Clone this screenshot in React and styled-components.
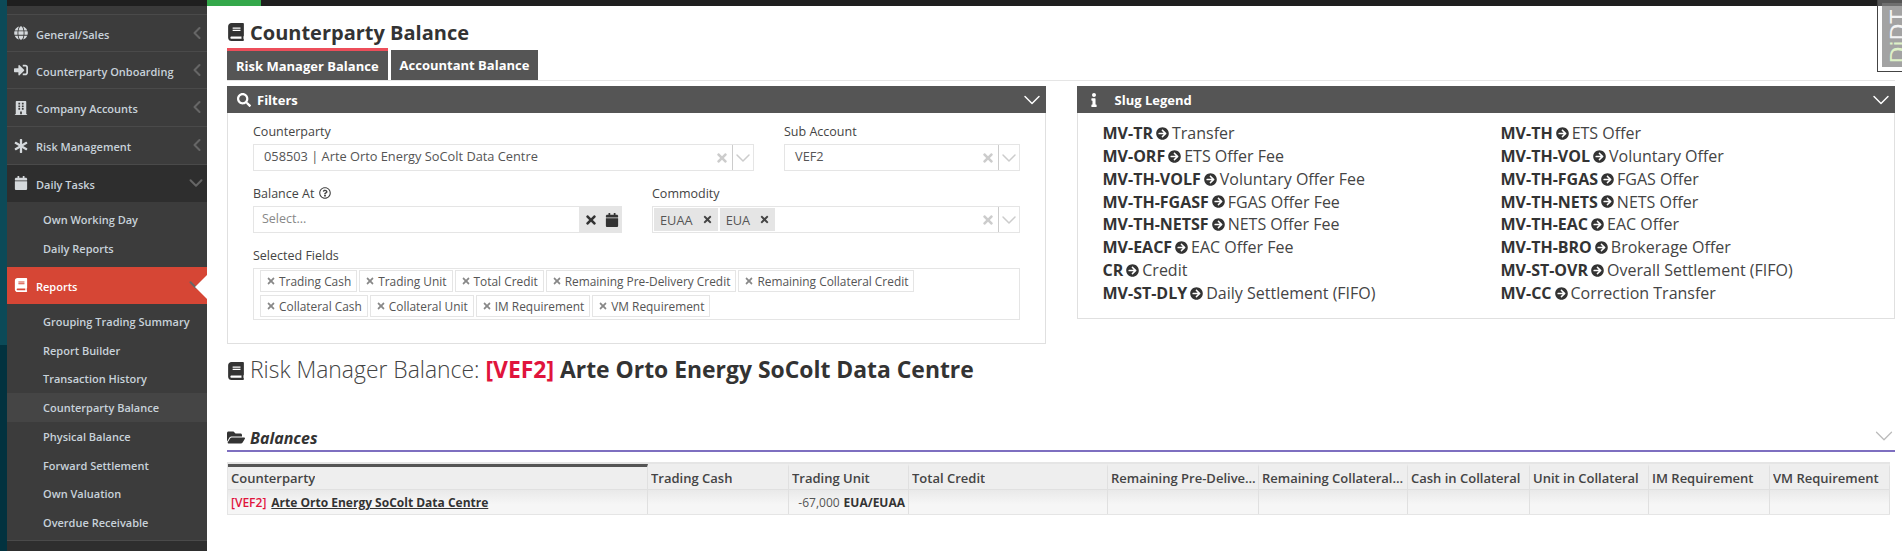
import React from "react";
import styled, { createGlobalStyle } from "styled-components";
import {
  FaArrowCircleRight,
  FaAsterisk,
  FaBook,
  FaBuilding,
  FaCalendar,
  FaFolderOpen,
  FaGlobe,
  FaInfo,
  FaRegQuestionCircle,
  FaSearch,
  FaSignInAlt,
  FaTimes,
} from "react-icons/fa";
import { ChevronDown, ChevronLeft } from "lucide-react";

const GlobalStyle = createGlobalStyle`
  html, body {
    margin: 0;
    padding: 0;
    height: 551px;
    overflow: hidden;
    background: #fff;
    font-family: "Open Sans", sans-serif;
    color: #333;
  }
  * { box-sizing: border-box; }
`;

const Page = styled.div`
  display: flex;
  width: 1902px;
  height: 551px;
  overflow: hidden;
  position: relative;
`;

const Rail = styled.div`
  width: 7px;
  background: linear-gradient(#0c4a58 0, #0c4a58 345px, #02323f 345px);
`;

const Sidebar = styled.nav`
  width: 200px;
  display: flex;
  flex-direction: column;
  background: #3c3c3c;
`;

const SideTop = styled.div`
  height: 15px;
  background: linear-gradient(#1f1f1f 0, #1f1f1f 6px, #3a3a3a 6px);
  border-bottom: 1px solid #4a4a4a;
`;

const MenuItem = styled.div`
  height: ${(p) => p.$h || 37}px;
  flex: none;
  display: flex;
  align-items: center;
  position: relative;
  padding: 2px 0 0 7px;
  font-size: 11px;
  font-weight: 600;
  color: ${(p) => (p.$active ? "#fff" : "#c8d2da")};
  background: ${(p) => (p.$active ? "#d64635" : p.$open ? "#2e2e2e" : "#3c3c3c")};
  border-bottom: 1px solid ${(p) => (p.$open || p.$active ? "transparent" : "#4a4a4a")};

  > svg:first-child {
    width: 14px;
    height: 14px;
    margin-right: 8px;
    margin-top: -2px;
    color: ${(p) => (p.$active ? "#fff" : "#d5d9dc")};
  }
`;

const MenuLabel = styled.span`
  flex: 1;
`;

const MenuArrow = styled.span`
  display: flex;
  margin-top: -3px;
  color: #666;
`;

const ActiveNotch = styled.span`
  position: absolute;
  right: 0;
  top: 8px;
  width: 0;
  height: 0;
  border-style: solid;
  border-width: 12px 12px 12px 0;
  border-color: transparent #fff transparent transparent;
`;

const SubMenu = styled.div`
  display: flex;
  flex-direction: column;
  padding: ${(p) => p.$pt}px 0 ${(p) => p.$pb}px;
`;

const SubItem = styled.div`
  height: 28.75px;
  flex: none;
  display: flex;
  align-items: center;
  padding-left: 36px;
  font-size: 11px;
  font-weight: 600;
  color: #c8d2da;
  background: ${(p) => (p.$current ? "#454545" : "transparent")};
`;

const SideBottom = styled.div`
  flex: 1;
  background: #2e2e2e;
  border-top: 1px solid #4a4a4a;
`;

const Main = styled.main`
  flex: 1;
  min-width: 0;
  display: flex;
  flex-direction: column;
`;

const TopBar = styled.div`
  height: 6px;
  flex: none;
  background: #1f1f1f;
`;

const Progress = styled.div`
  width: 54px;
  height: 6px;
  background: #34a84b;
`;

const Content = styled.div`
  padding: 0 7px 0 20px;
  display: flex;
  flex-direction: column;
`;

const PageTitle = styled.h1`
  margin: 0;
  height: 42px;
  display: flex;
  align-items: center;
  gap: 5px;
  padding-top: 10px;
  font-size: 20px;
  font-weight: 700;
  color: #333;

  svg {
    font-size: 18px;
    width: 18px;
  }
`;

const Tabs = styled.div`
  display: flex;
  gap: 3px;
  height: 33px;
  border-bottom: 1px solid #e5e5e5;
`;

const Tab = styled.div`
  height: ${(p) => (p.$active ? 32 : 30)}px;
  margin-top: ${(p) => (p.$active ? 0 : 2)}px;
  padding: 0 9px;
  display: flex;
  align-items: center;
  background: #555;
  color: #fff;
  font-size: 13px;
  font-weight: 700;
  border-top: ${(p) => (p.$active ? "3px solid #ed4e5a" : "none")};
`;

const PanelRow = styled.div`
  display: flex;
  align-items: flex-start;
  gap: 31px;
  margin-top: 5px;
`;

const Panel = styled.section`
  flex: 1;
  min-width: 0;
  height: ${(p) => p.$h}px;
  border: 1px solid #e0e0e0;
  border-top: none;
`;

const PanelHead = styled.div`
  height: 27px;
  margin: 0 -1px;
  padding: 0 0 0 10px;
  display: flex;
  align-items: center;
  background: #555;
  color: #fff;
  font-size: 13px;
  font-weight: 700;

  > svg:first-child {
    font-size: 14px;
    margin-right: ${(p) => p.$iconGap || 6}px;
  }
`;

const HeadLabel = styled.span`
  flex: 1;
`;

const FilterBody = styled.div`
  padding: 7px 25px 0;
  display: flex;
  flex-direction: column;
`;

const FormRow = styled.div`
  display: flex;
  gap: 30px;
  margin-bottom: 11px;
`;

const Field = styled.div`
  width: ${(p) => p.$w}px;
  flex: none;
  display: flex;
  flex-direction: column;
`;

const Label = styled.label`
  height: 24px;
  padding-bottom: 2px;
  display: flex;
  align-items: center;
  gap: 5px;
  font-size: 12.5px;
  color: #444;

  svg {
    font-size: 12px;
  }
`;

const SelectBox = styled.div`
  height: 27px;
  display: flex;
  align-items: center;
  border: 1px solid #e5e5e5;
  font-size: 12.8px;
  color: #555;
  background: #fff;
`;

const SelectValue = styled.div`
  flex: 1;
  min-width: 0;
  display: flex;
  align-items: center;
  gap: 2px;
  padding-left: ${(p) => (p.$chips ? 1 : 10)}px;
  padding-bottom: ${(p) => (p.$chips ? 0 : 3)}px;
`;

const SelectClear = styled.span`
  width: 14px;
  margin-right: 3px;
  display: flex;
  justify-content: center;
  color: #ccc;
  font-size: 14px;
`;

const SelectArrow = styled.span`
  width: 21px;
  height: 25px;
  display: flex;
  align-items: center;
  justify-content: center;
  border-left: 1px solid #ccc;
  color: #ccc;

  svg {
    flex: none;
  }
`;

const TagChip = styled.span`
  height: 23px;
  padding: 0 5px 0 6px;
  display: flex;
  align-items: center;
  gap: 9px;
  background: #e5e5e5;
  color: #555;

  svg {
    font-size: 11px;
    color: #444;
  }
`;

const DateGroup = styled.div`
  display: flex;
  height: 27px;
`;

const DateInput = styled.div`
  flex: 1;
  padding: 0 0 2px 8px;
  display: flex;
  align-items: center;
  border: 1px solid #e5e5e5;
  font-size: 12.5px;
  color: #888;
`;

const DateAddon = styled.div`
  width: 42px;
  display: flex;
  align-items: center;
  justify-content: center;
  gap: 7px;
  background: #e5e5e5;
  color: #333;
  font-size: 14px;
`;

const FieldBox = styled.div`
  display: flex;
  flex-wrap: wrap;
  align-content: flex-start;
  gap: 3px 2px;
  height: 52px;
  padding: 1px 6px;
  border: 1px solid #e5e5e5;
`;

const FieldChip = styled.span`
  height: 22px;
  padding: 0 5px;
  display: flex;
  align-items: center;
  gap: 3px;
  border: 1px solid #e5e5e5;
  font-size: 11.9px;
  color: #555;

  svg {
    font-size: 10px;
    color: #888;
  }
`;

const LegendGrid = styled.div`
  display: grid;
  grid-template-columns: 398px 398px;
  padding: 9px 25px 0;
  font-size: 16px;
  line-height: 22.85px;
  color: #444;
`;

const LegendRow = styled.div`
  display: flex;
  align-items: center;
  gap: 3px;
  white-space: nowrap;

  b {
    color: #333;
    font-weight: 700;
  }

  svg {
    font-size: 13px;
    color: #333;
  }
`;

const SectionTitle = styled.h2`
  margin: 0;
  padding-top: 9px;
  height: ${(p) => p.$h}px;
  display: flex;
  align-items: flex-start;
  gap: 5px;
  font-size: 22.9px;
  font-weight: 300;
  line-height: 34px;
  color: #444;

  > svg {
    font-size: 18px;
    width: 18px;
    margin-top: 9px;
    color: #333;
  }

  b {
    font-weight: 700;
    color: #333;
  }

  em {
    font-style: normal;
    font-weight: 700;
    color: #e0143c;
  }
`;

const SubHead = styled.div`
  height: 29px;
  display: flex;
  align-items: center;
  padding-top: 2px;
  gap: 5px;
  border-bottom: 2px solid #7e6fc0;
  font-size: 16px;
  font-weight: 700;
  font-style: italic;
  color: #333;

  > svg:first-child {
    font-size: 17px;
    width: 18px;
  }
`;

const SubHeadLabel = styled.span`
  flex: 1;
`;

const CollapseIcon = styled.span`
  display: flex;
  margin-right: -4px;
  margin-top: -3px;
  color: #bbb;
`;

const Table = styled.div`
  width: 1663px;
  margin-top: 10px;
  border: 1px solid #e5e5e5;
  border-top-width: 2px;
`;

const TableRow = styled.div`
  display: grid;
  grid-template-columns: 420px 141px 120px 199px 151px 149px 122px 119px 121px 120px;
`;

const HeadCell = styled.div`
  height: 26px;
  padding: 0 1px 0 3px;
  display: flex;
  align-items: center;
  background: #eee;
  border-right: 1px solid #e0e0e0;
  border-bottom: 1px solid #e0e0e0;
  border-top: 3px solid ${(p) => (p.$sorted ? "#555" : "#eee")};
  font-size: 13px;
  font-weight: 600;
  color: #444;
  overflow: hidden;

  span {
    overflow: hidden;
    text-overflow: ellipsis;
    white-space: nowrap;
  }
`;

const BodyCell = styled.div`
  height: 24px;
  padding: 0 3px;
  display: flex;
  align-items: center;
  justify-content: ${(p) => (p.$right ? "flex-end" : "flex-start")};
  gap: 5px;
  background: linear-gradient(#e9e9e9, #f6f6f6 60%);
  border-right: 1px solid #e0e0e0;
  font-size: 12px;
  color: #555;
  white-space: nowrap;

  b {
    font-weight: 700;
    color: #333;
    margin-left: -1px;
  }
`;

const SlugTag = styled.span`
  color: #e0143c;
  font-weight: 600;
`;

const CounterLink = styled.a`
  color: #333;
  font-weight: 700;
  text-decoration: underline;
`;

const DebugHandle = styled.div`
  position: absolute;
  top: 0;
  right: 0;
  width: 25px;
  height: 72px;
  overflow: hidden;
  border: 1px solid #444;
  border-top: none;
  border-right: none;
  background: linear-gradient(#555 0, #555 6px, #fff 6px);
  padding: 3px 0 4px 4px;
`;

const DebugInner = styled.div`
  width: 100%;
  height: 100%;
  background: linear-gradient(#6f6f6f 0, #6f6f6f 3px, #a3a3a3 3px);
  display: flex;
  justify-content: flex-start;
  align-items: flex-end;
`;

const DebugText = styled.span`
  writing-mode: vertical-rl;
  transform: rotate(180deg);
  font-family: "DejaVu Sans", sans-serif;
  font-size: 22px;
  line-height: 24px;
  color: #f4f4f4;
  margin: 0 0 4px 5px;
  white-space: nowrap;

  i {
    font-style: normal;
    color: #dff2c8;
  }
`;

const topMenu = [
  { label: "General/Sales", icon: FaGlobe, h: 37 },
  { label: "Counterparty Onboarding", icon: FaSignInAlt, h: 37 },
  { label: "Company Accounts", icon: FaBuilding, h: 38 },
  { label: "Risk Management", icon: FaAsterisk, h: 38 },
];

const reportLinks = [
  "Grouping Trading Summary",
  "Report Builder",
  "Transaction History",
  "Counterparty Balance",
  "Physical Balance",
  "Forward Settlement",
  "Own Valuation",
  "Overdue Receivable",
];

const selectedFields = [
  "Trading Cash",
  "Trading Unit",
  "Total Credit",
  "Remaining Pre-Delivery Credit",
  "Remaining Collateral Credit",
  "Collateral Cash",
  "Collateral Unit",
  "IM Requirement",
  "VM Requirement",
];

const slugs = [
  ["MV-TR", "Transfer"],
  ["MV-TH", "ETS Offer"],
  ["MV-ORF", "ETS Offer Fee"],
  ["MV-TH-VOL", "Voluntary Offer"],
  ["MV-TH-VOLF", "Voluntary Offer Fee"],
  ["MV-TH-FGAS", "FGAS Offer"],
  ["MV-TH-FGASF", "FGAS Offer Fee"],
  ["MV-TH-NETS", "NETS Offer"],
  ["MV-TH-NETSF", "NETS Offer Fee"],
  ["MV-TH-EAC", "EAC Offer"],
  ["MV-EACF", "EAC Offer Fee"],
  ["MV-TH-BRO", "Brokerage Offer"],
  ["CR", "Credit"],
  ["MV-ST-OVR", "Overall Settlement (FIFO)"],
  ["MV-ST-DLY", "Daily Settlement (FIFO)"],
  ["MV-CC", "Correction Transfer"],
];

const columns = [
  "Counterparty",
  "Trading Cash",
  "Trading Unit",
  "Total Credit",
  "Remaining Pre-Delivery Credit",
  "Remaining Collateral Credit",
  "Cash in Collateral",
  "Unit in Collateral",
  "IM Requirement",
  "VM Requirement",
];

function Select({ children, chips }) {
  return (
    <SelectBox>
      <SelectValue $chips={chips}>{children}</SelectValue>
      <SelectClear>
        <FaTimes />
      </SelectClear>
      <SelectArrow>
        <ChevronDown size={24} strokeWidth={1.5} />
      </SelectArrow>
    </SelectBox>
  );
}

function App() {
  return (
    <Page>
      <GlobalStyle />
      <Rail />
      <Sidebar>
        <SideTop />
        {topMenu.map((item) => (
          <MenuItem key={item.label} $h={item.h}>
            <item.icon />
            <MenuLabel>{item.label}</MenuLabel>
            <MenuArrow>
              <ChevronLeft size={20} strokeWidth={2.5} />
            </MenuArrow>
          </MenuItem>
        ))}
        <MenuItem $open>
          <FaCalendar />
          <MenuLabel>Daily Tasks</MenuLabel>
          <MenuArrow>
            <ChevronDown size={22} strokeWidth={2.2} />
          </MenuArrow>
        </MenuItem>
        <SubMenu $pt={3} $pb={4.5}>
          <SubItem>Own Working Day</SubItem>
          <SubItem>Daily Reports</SubItem>
        </SubMenu>
        <MenuItem $active>
          <FaBook />
          <MenuLabel>Reports</MenuLabel>
          <MenuArrow>
            <ChevronDown size={22} strokeWidth={2.2} />
          </MenuArrow>
          <ActiveNotch />
        </MenuItem>
        <SubMenu $pt={3} $pb={3}>
          {reportLinks.map((link) => (
            <SubItem key={link} $current={link === "Counterparty Balance"}>
              {link}
            </SubItem>
          ))}
        </SubMenu>
        <SideBottom />
      </Sidebar>

      <Main>
        <TopBar>
          <Progress />
        </TopBar>
        <Content>
          <PageTitle>
            <FaBook />
            Counterparty Balance
          </PageTitle>
          <Tabs>
            <Tab $active>Risk Manager Balance</Tab>
            <Tab>Accountant Balance</Tab>
          </Tabs>

          <PanelRow>
            <Panel $h={258}>
              <PanelHead>
                <FaSearch />
                <HeadLabel>Filters</HeadLabel>
                <ChevronDown size={28} strokeWidth={1.25} />
              </PanelHead>
              <FilterBody>
                <FormRow>
                  <Field $w={501}>
                    <Label>Counterparty</Label>
                    <Select>058503 | Arte Orto Energy SoColt Data Centre</Select>
                  </Field>
                  <Field $w={236}>
                    <Label>Sub Account</Label>
                    <Select>VEF2</Select>
                  </Field>
                </FormRow>
                <FormRow>
                  <Field $w={369}>
                    <Label>
                      Balance At <FaRegQuestionCircle />
                    </Label>
                    <DateGroup>
                      <DateInput>Select...</DateInput>
                      <DateAddon>
                        <FaTimes />
                        <FaCalendar />
                      </DateAddon>
                    </DateGroup>
                  </Field>
                  <Field $w={368}>
                    <Label>Commodity</Label>
                    <Select chips>
                      <TagChip>
                        EUAA <FaTimes />
                      </TagChip>
                      <TagChip>
                        EUA <FaTimes />
                      </TagChip>
                    </Select>
                  </Field>
                </FormRow>
                <Field $w={767}>
                  <Label>Selected Fields</Label>
                  <FieldBox>
                    {selectedFields.map((name) => (
                      <FieldChip key={name}>
                        <FaTimes />
                        {name}
                      </FieldChip>
                    ))}
                  </FieldBox>
                </Field>
              </FilterBody>
            </Panel>

            <Panel $h={233}>
              <PanelHead $iconGap={14}>
                <FaInfo />
                <HeadLabel>Slug Legend</HeadLabel>
                <ChevronDown size={28} strokeWidth={1.25} />
              </PanelHead>
              <LegendGrid>
                {slugs.map(([code, name]) => (
                  <LegendRow key={code}>
                    <b>{code}</b>
                    <FaArrowCircleRight />
                    {name}
                  </LegendRow>
                ))}
              </LegendGrid>
            </Panel>
          </PanelRow>

          <SectionTitle $h={79}>
            <FaBook />
            <span>
              Risk Manager Balance: <em>[VEF2]</em> <b>Arte Orto Energy SoColt Data Centre</b>
            </span>
          </SectionTitle>

          <SubHead>
            <FaFolderOpen />
            <SubHeadLabel>Balances</SubHeadLabel>
            <CollapseIcon>
              <ChevronDown size={30} strokeWidth={1} />
            </CollapseIcon>
          </SubHead>

          <Table>
            <TableRow>
              {columns.map((col, i) => (
                <HeadCell key={col} $sorted={i === 0}>
                  <span>{col}</span>
                </HeadCell>
              ))}
            </TableRow>
            <TableRow>
              <BodyCell>
                <SlugTag>[VEF2]</SlugTag>
                <CounterLink>Arte Orto Energy SoColt Data Centre</CounterLink>
              </BodyCell>
              <BodyCell />
              <BodyCell $right>
                -67,000 <b>EUA/EUAA</b>
              </BodyCell>
              {columns.slice(3).map((col) => (
                <BodyCell key={col} />
              ))}
            </TableRow>
          </Table>
        </Content>
      </Main>

      <DebugHandle>
        <DebugInner>
          <DebugText>
            <i>Dj</i>DT
          </DebugText>
        </DebugInner>
      </DebugHandle>
    </Page>
  );
}

export default App;
